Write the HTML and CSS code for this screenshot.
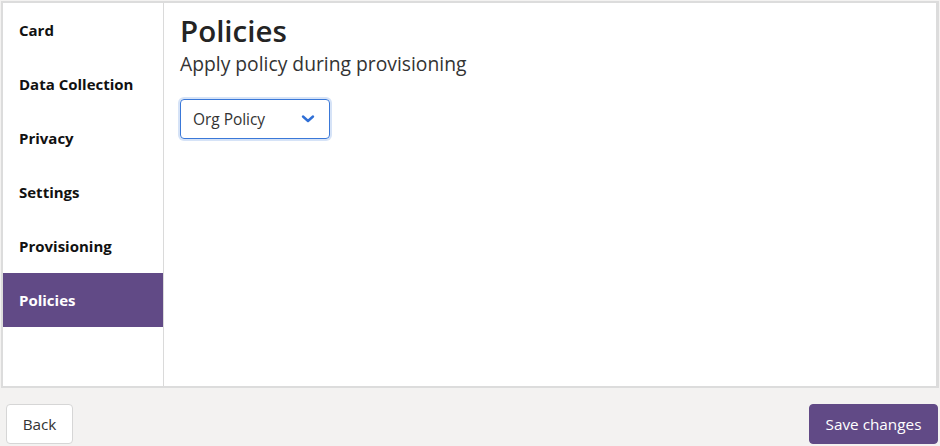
FILE: index.html
```html
<!DOCTYPE html>
<html>
<head>
<meta charset="utf-8">
<link rel="stylesheet" href="styles.css">
</head>
<body>
<div class="page">
  <div class="frame">
    <nav class="sidebar">
      <div class="nav-item">Card</div>
      <div class="nav-item">Data Collection</div>
      <div class="nav-item">Privacy</div>
      <div class="nav-item">Settings</div>
      <div class="nav-item">Provisioning</div>
      <div class="nav-item active">Policies</div>
    </nav>
    <main class="content">
      <h1 class="title">Policies</h1>
      <p class="subtitle">Apply policy during provisioning</p>
      <div class="select">
        <span class="select-text">Org Policy</span>
        <svg class="chevron" width="14" height="10" viewBox="0 0 14 10"><path d="M2 2.5 L7 7 L12 2.5" fill="none" stroke="#2f6fd6" stroke-width="2.4" stroke-linecap="round" stroke-linejoin="round"/></svg>
      </div>
    </main>
  </div>
  <div class="actions">
    <button class="btn btn-back">Back</button>
    <button class="btn btn-save">Save changes</button>
  </div>
</div>
</body>
</html>
```
FILE: styles.css
```css
html, body {
  margin: 0;
  padding: 0;
}
body {
  background: #f3f2f1;
  font-family: "Open Sans", "Noto Sans", sans-serif;
  color: #242424;
  width: 940px;
  height: 446px;
  overflow: hidden;
}
.page {
  display: flex;
  flex-direction: column;
  padding: 1px 1px 0 1px;
}
.frame {
  display: flex;
  height: 383px;
  border: 2px solid #dcdcdc;
  border-right-width: 3px;
  background: #fff;
}
.sidebar {
  width: 160px;
  border-right: 1px solid #dadada;
  display: flex;
  flex-direction: column;
  flex: none;
}
.nav-item {
  height: 54px;
  display: flex;
  align-items: center;
  padding-left: 16px;
  font-size: 15px;
  font-weight: 700;
  color: #111;
}
.nav-item.active {
  background: #614a86;
  color: #fff;
}
.content {
  flex: 1;
  padding: 0 16px;
}
.title {
  margin: 9px 0 0 0;
  font-size: 29.5px;
  font-weight: 600;
  line-height: 38px;
}
.subtitle {
  margin: 1px 0 0 0;
  font-size: 19.3px;
  line-height: 26px;
  color: #333;
}
.select {
  margin-top: 22px;
  border: 1.5px solid #3a78d8;
  border-radius: 4px;
  box-shadow: 0 0 0 2px #d6e3f7;
  display: flex;
  align-items: center;
  justify-content: space-between;
  padding: 0 14px 0 12px;
  box-sizing: border-box;
  width: 150px;
  height: 40px;
}
.select-text {
  font-size: 15.5px;
  color: #333;
  letter-spacing: -0.05px;
}
.chevron {
  display: block;
}
.actions {
  display: flex;
  justify-content: space-between;
  padding: 16px 1px 0 5px;
}
.btn {
  height: 40px;
  border-radius: 4px;
  font-family: "Open Sans", "Noto Sans", sans-serif;
  font-size: 15.3px;
  padding: 0 10px;
}
.btn-back {
  background: #fff;
  border: 1px solid #d6d6d6;
  color: #333;
  width: 67px;
}
.btn-save {
  background: #614a86;
  border: 1px solid #614a86;
  color: #fff;
  width: 129px;
}
```
